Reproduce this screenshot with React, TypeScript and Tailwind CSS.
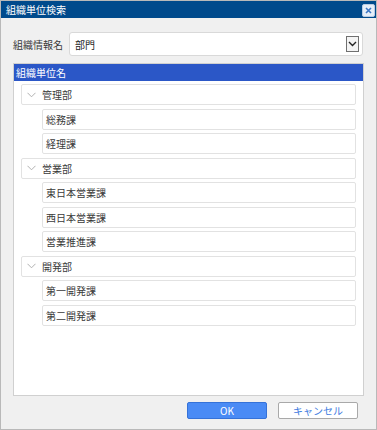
import React from 'react';

const font = { fontFamily: '"Noto Sans CJK JP", "Noto Sans", sans-serif' };

const tree = [
  { name: '管理部', children: ['総務課', '経理課'] },
  { name: '営業部', children: ['東日本営業課', '西日本営業課', '営業推進課'] },
  { name: '開発部', children: ['第一開発課', '第二開発課'] },
];

const Chevron = () => (
  <svg width="9" height="6" viewBox="0 0 9 6" className="shrink-0">
    <path d="M0.5 0.8 L4.5 4.8 L8.5 0.8" fill="none" stroke="#a8a8a8" strokeWidth="0.9" />
  </svg>
);

const App: React.FC = () => {
  return (
    <div
      className="w-[377px] h-[430px] bg-[#f0f0f0] border border-[#b9b9b9] flex flex-col text-[10px] text-[#3a3a3a]"
      style={font}
    >
      {/* title bar */}
      <div className="h-[17px] bg-[#004a8c] flex items-center justify-between pl-[5px] pr-[1px] text-white">
        <span>組織単位検索</span>
        <button className="w-[13px] h-[13px] mt-[2px] rounded-[2px] bg-[#e6eef8] border border-[#b8cbe3] flex items-center justify-center">
          <svg width="7" height="7" viewBox="0 0 7 7">
            <path d="M1 1 L6 6 M6 1 L1 6" stroke="#3b76c4" strokeWidth="1.6" />
          </svg>
        </button>
      </div>

      <div className="flex-1 flex flex-col px-[12px] pt-[14px]">
        {/* select row */}
        <div className="flex items-center h-[24px]">
          <span className="w-[56px]">組織情報名</span>
          <div className="flex-1 h-[24px] bg-white border border-[#d9d9d9] rounded-[3px] flex items-center justify-between pl-[5px] pr-[3px] mr-[1px]">
            <span className="text-[#222]">部門</span>
            <div className="w-[13px] h-[16px] border border-[#707070] bg-[#f4f4f4] flex items-center justify-center">
              <svg width="9" height="6" viewBox="0 0 9 6">
                <path d="M1 1 L4.5 4.5 L8 1" fill="none" stroke="#222" strokeWidth="1.4" />
              </svg>
            </div>
          </div>
        </div>

        {/* unit panel */}
        <div className="mt-[7px] h-[333px] w-[351px] bg-white border border-[#d0d0d0] flex flex-col">
          <div className="h-[17px] bg-[#2b57c7] text-white flex items-center pl-[2px]">組織単位名</div>
          <div className="flex flex-col gap-[3.5px] pt-[3px] pl-[7px] pr-[7px]">
            {tree.map((dept) => (
              <React.Fragment key={dept.name}>
                <div className="h-[21px] border border-[#e2e2e2] rounded-[2px] flex items-center pl-[5px] gap-[6px]">
                  <Chevron />
                  <span>{dept.name}</span>
                </div>
                {dept.children.map((c) => (
                  <div
                    key={c}
                    className="ml-[21px] h-[21px] border border-[#e2e2e2] rounded-[2px] flex items-center pl-[3px]"
                  >
                    {c}
                  </div>
                ))}
              </React.Fragment>
            ))}
          </div>
        </div>

        {/* buttons */}
        <div className="flex justify-end gap-[11px] mt-[6px] pr-[6px]">
          <button className="w-[80px] h-[17px] rounded-[2px] bg-[#4a8bf5] border border-[#3572d8] text-white text-[10px] leading-none">
            OK
          </button>
          <button className="w-[80px] h-[17px] rounded-[2px] bg-white border border-[#a9a9a9] text-[#3d7be0] text-[10px] leading-none">
            キャンセル
          </button>
        </div>
      </div>
    </div>
  );
};

export default App;
